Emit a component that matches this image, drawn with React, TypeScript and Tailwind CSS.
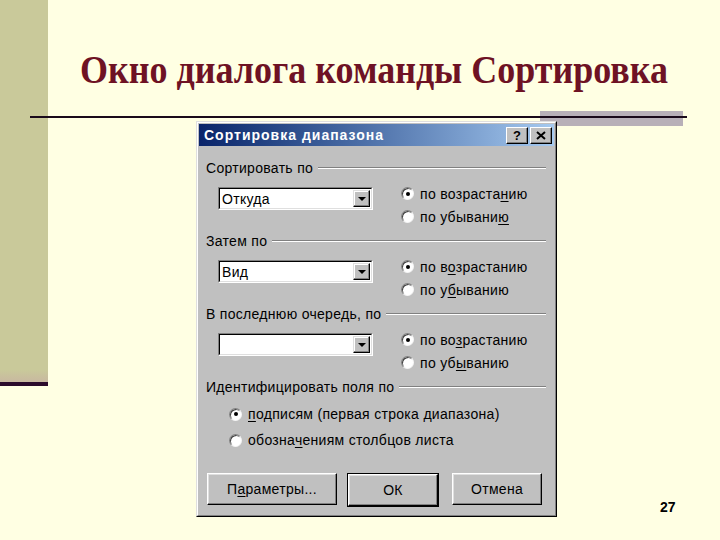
import React from 'react';

const sans = { fontFamily: '"Liberation Sans", Arial, sans-serif' };

function Radio({ checked = false }: { checked?: boolean }) {
  return (
    <div className="w-[13px] h-[13px] rounded-full border border-t-[#808080] border-l-[#808080] border-r-[#f4f4f4] border-b-[#f4f4f4] bg-white shadow-[inset_1px_1px_0_#404040] flex items-center justify-center shrink-0">
      {checked && <div className="w-[4px] h-[4px] rounded-full bg-black" />}
    </div>
  );
}

function Combo({ value }: { value: string }) {
  return (
    <div className="w-[155px] h-[23px] border border-t-[#808080] border-l-[#808080] border-r-white border-b-white">
      <div className="h-full flex items-stretch bg-white border border-t-black border-l-black border-r-[#dfdfdf] border-b-[#dfdfdf]">
        <div className="flex-1 flex items-center pl-[2px] text-[14px] tracking-[0.3px] text-black leading-none">{value}</div>
        <div className="w-[17px] m-[1px] bg-[#c0c0c0] border border-t-[#dfdfdf] border-l-[#dfdfdf] border-r-black border-b-black shadow-[inset_-1px_-1px_0_#808080,inset_1px_1px_0_white] flex items-center justify-center">
          <div className="w-0 h-0 border-l-[4px] border-r-[4px] border-t-[4px] border-l-transparent border-r-transparent border-t-black" />
        </div>
      </div>
    </div>
  );
}

function GroupLabel({ text }: { text: string }) {
  return (
    <div className="h-[16px] flex items-center gap-[5px]">
      <span className="text-[14px] tracking-[0.3px] leading-none whitespace-nowrap">{text}</span>
      <div className="flex-1 h-[2px] border-t border-t-[#808080] border-b border-b-white" />
    </div>
  );
}

function SortGroup({ label, value, asc, desc }: { label: string; value: string; asc: React.ReactNode; desc: React.ReactNode }) {
  return (
    <div className="h-[73px]">
      <GroupLabel text={label} />
      <div className="flex items-start mt-[6px]">
        <div className="ml-[12px] mt-[5px]">
          <Combo value={value} />
        </div>
        <div className="ml-[28px] flex flex-col">
          <div className="h-[23px] flex items-center gap-[6px]">
            <Radio checked />
            <span className="text-[14px] tracking-[0.3px] leading-none">{asc}</span>
          </div>
          <div className="h-[23px] flex items-center gap-[6px]">
            <Radio />
            <span className="text-[14px] tracking-[0.3px] leading-none">{desc}</span>
          </div>
        </div>
      </div>
    </div>
  );
}

function Btn({ w, children }: { w: string; children: React.ReactNode }) {
  return (
    <div className={`${w} h-[32px] bg-[#c0c0c0] border border-t-white border-l-white border-r-black border-b-black shadow-[inset_-1px_-1px_0_#808080,inset_1px_1px_0_#dfdfdf] flex items-center justify-center text-[14px] tracking-[0.3px] leading-none`}>
      {children}
    </div>
  );
}

export default function App() {
  return (
    <div className="w-[720px] h-[540px] bg-[#ffffe3] flex overflow-hidden">
      <div className="w-[48px] shrink-0 flex flex-col">
        <div className="h-[370px] bg-[#c9c99a]" />
        <div className="h-[12px] bg-gradient-to-b from-[#c9c99a] to-[#c8b8a0]" />
        <div className="h-[4px] bg-[#2b0b2b]" />
      </div>

      <div className="flex-1 flex flex-col">
        <div className="h-[110px] pt-[49px] pl-[32px]">
          <h1
            className="text-[36px] font-bold leading-none text-[#6e1224] whitespace-nowrap scale-y-[1.12] origin-top"
            style={{ fontFamily: '"Liberation Serif", "Times New Roman", serif' }}
          >
            Окно диалога команды Сортировка
          </h1>
        </div>

        <div className="relative h-[11px] pt-[6px]">
          <div className="absolute left-[492px] top-[1px] w-[143px] h-[15px] bg-[#b8b0b8]" />
          <div className="relative ml-[-18px] w-[657px] h-[2px] bg-[#1a0a1a]" />
        </div>

        <div className="flex items-end" style={sans}>
          <div className="relative ml-[148px] w-[361px] h-[396px] bg-[#c0c0c0] border border-t-[#dfdfdf] border-l-[#dfdfdf] border-r-black border-b-black">
            <div className="h-full p-[1px] border border-t-white border-l-white border-r-[#808080] border-b-[#808080] flex flex-col">
              <div className="h-[22px] bg-gradient-to-r from-[#0a246a] to-[#a6caf0] flex items-center pl-[5px] pr-[2px]">
                <span className="text-white font-bold text-[14px] tracking-[1px] leading-none flex-1">Сортировка диапазона</span>
                <div className="flex gap-[2px]">
                  <div className="w-[22px] h-[17px] bg-[#c0c0c0] border border-t-white border-l-white border-r-black border-b-black shadow-[inset_-1px_-1px_0_#808080] flex items-center justify-center text-[13px] font-bold leading-none text-black">
                    ?
                  </div>
                  <div className="w-[22px] h-[17px] bg-[#c0c0c0] border border-t-white border-l-white border-r-black border-b-black shadow-[inset_-1px_-1px_0_#808080] flex items-center justify-center">
                    <svg width="10" height="9" viewBox="0 0 10 9">
                      <path d="M1 1 L9 8 M9 1 L1 8" stroke="black" strokeWidth="2" />
                    </svg>
                  </div>
                </div>
              </div>

              <div className="flex flex-col pt-[14px] pl-[7px] pr-[8px] text-black">
                <SortGroup
                  label="Сортировать по"
                  value="Откуда"
                  asc={<>по возраста<u className="underline-offset-2">н</u>ию</>}
                  desc={<>по убывани<u className="underline-offset-2">ю</u></>}
                />
                <SortGroup
                  label="Затем по"
                  value="Вид"
                  asc={<>по в<u className="underline-offset-2">о</u>зрастанию</>}
                  desc={<>по у<u className="underline-offset-2">б</u>ыванию</>}
                />
                <SortGroup
                  label="В последнюю очередь, по"
                  value=""
                  asc={<>по во<u className="underline-offset-2">з</u>растанию</>}
                  desc={<>по уб<u className="underline-offset-2">ы</u>ванию</>}
                />
                <div>
                  <GroupLabel text="Идентифицировать поля по" />
                  <div className="flex flex-col mt-[6px] ml-[23px]">
                    <div className="h-[26px] flex items-center gap-[6px]">
                      <Radio checked />
                      <span className="text-[14px] tracking-[0.3px] leading-none"><u className="underline-offset-2">п</u>одписям (первая строка диапазона)</span>
                    </div>
                    <div className="h-[26px] flex items-center gap-[6px]">
                      <Radio />
                      <span className="text-[14px] tracking-[0.3px] leading-none">обозна<u className="underline-offset-2">ч</u>ениям столбцов листа</span>
                    </div>
                  </div>
                </div>
                <div className="flex mt-[20px] ml-[1px]">
                  <Btn w="w-[130px]">
                    <span>П<u className="underline-offset-2">а</u>раметры...</span>
                  </Btn>
                  <div className="ml-[10px] border border-black">
                    <Btn w="w-[90px]">ОК</Btn>
                  </div>
                  <div className="ml-[13px]">
                    <Btn w="w-[90px]">Отмена</Btn>
                  </div>
                </div>
              </div>
            </div>
          </div>
          <div className="ml-[103px] mb-[3px] text-[14px] font-bold text-black leading-none">27</div>
        </div>
      </div>
    </div>
  );
}
